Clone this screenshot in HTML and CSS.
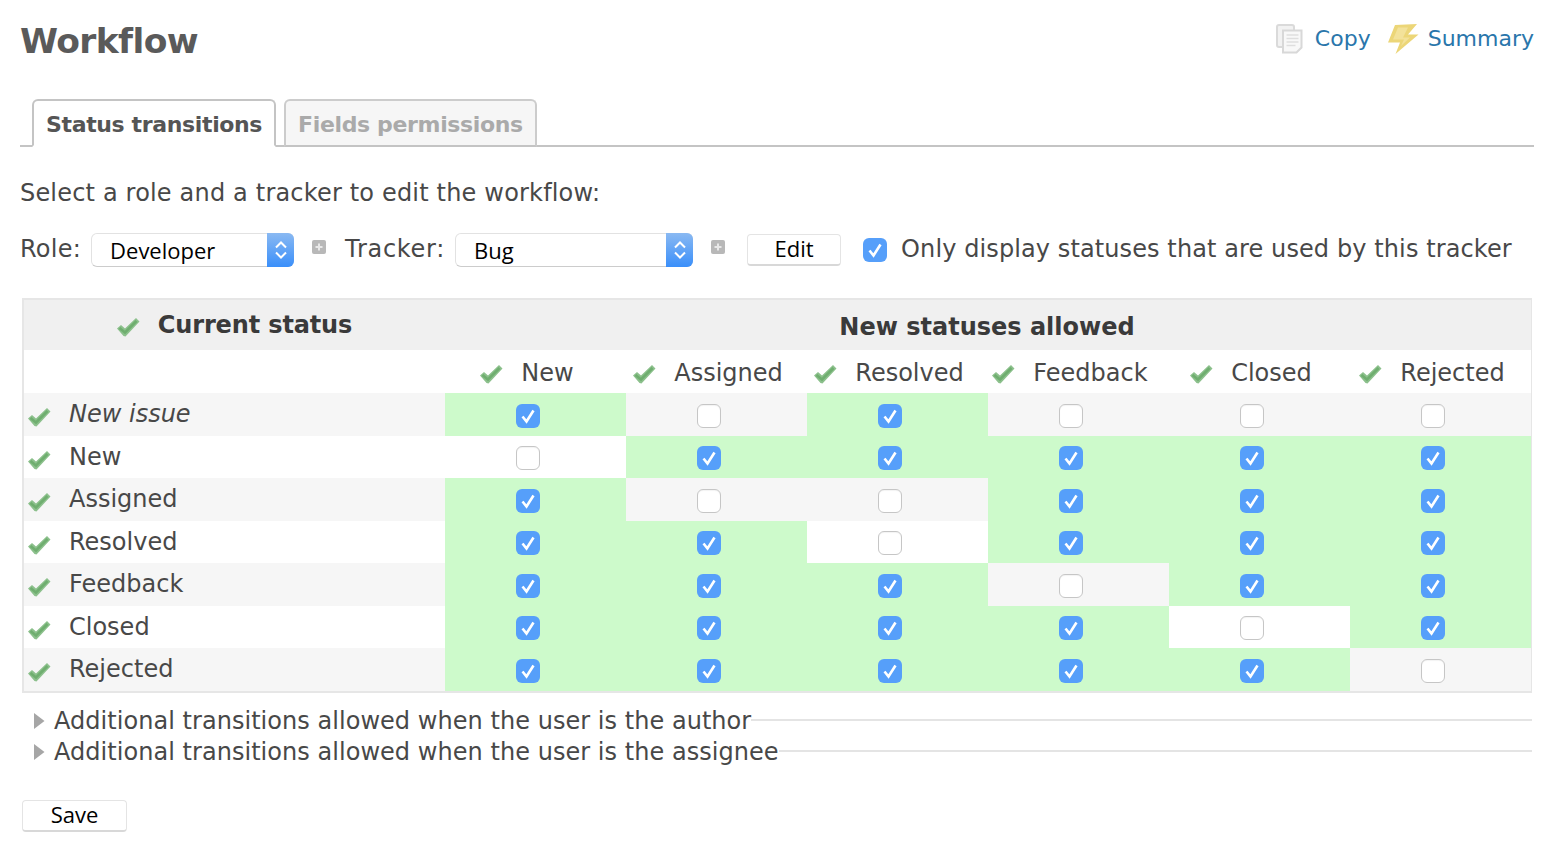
FILE: index.html
```html
<!DOCTYPE html>
<html lang="en">
<head>
<meta charset="utf-8">
<title>Workflow</title>
<link rel="stylesheet" href="styles.css">
</head>
<body>
<svg class="defs" width="0" height="0" aria-hidden="true">
  <defs>
    <symbol id="tick" viewBox="0 0 24 20">
      <path d="M1 11.500 5 8l4 3.500L20 1l3.500 3.500L9.500 19.500l-2-.5z" fill="#8cc08c"/>
      <path d="M3.500 11 9 15.500 20.500 4" fill="none" stroke="#6fae6f" stroke-width="2.500"/>
    </symbol>
    <symbol id="plus" viewBox="0 0 16 16">
      <rect x="1" y="1" width="14" height="14" rx="2" fill="#b8b8b8"/>
      <path d="M8 4.500v7M4.500 8h7" stroke="#e8e8e8" stroke-width="2"/>
    </symbol>
    <symbol id="tri" viewBox="0 0 12 18">
      <path d="M1 1 11.500 9 1 17z" fill="#a6a6a6"/>
    </symbol>
  </defs>
</svg>
<main class="page">
  <header class="top">
    <h1 class="title">Workflow</h1>
    <nav class="actions">
      <a class="action" href="#">
        <svg class="ico-copy" viewBox="0 0 27 30"><rect x="1" y="1" width="17" height="22" rx="2" fill="#f2f2f2" stroke="#dadada" stroke-width="2"/><path d="M7 6.500h18.500v17L20.500 28.500H7z" fill="#f8f8f8" stroke="#d8d8d8" stroke-width="2"/><path d="M10.500 11h12M10.500 14.500h12M10.500 18h12M10.500 21.500h9" stroke="#dedede" stroke-width="1.500"/></svg>
        Copy</a>
      <a class="action" href="#">
        <svg class="ico-bolt" viewBox="0 0 31 30"><path d="M7 1 29 0 20 10.500h10.500L7.500 30 12 18.500H0z" fill="#ecd678"/><path d="M10 3.500 5 15.500h11l-3 6.500 9-8.500h-7l5-10z" fill="#f3e29a"/></svg>
        Summary</a>
    </nav>
  </header>

  <div class="tabs">
    <a class="tab tab-on" href="#">Status transitions</a>
    <a class="tab" href="#">Fields permissions</a>
  </div>

  <p class="intro">Select a role and a tracker to edit the workflow:</p>

  <form class="filters">
    <span class="lbl lbl-role">Role:</span>
    <span class="select sel-role">Developer<span class="stepper"><svg viewBox="0 0 14 24"><path d="M2 9.500 7 4.500l5 5M2 14.500l5 5 5-5" fill="none" stroke="#fff" stroke-width="2"/></svg></span></span>
    <svg class="ico-plus"><use href="#plus"/></svg>
    <span class="lbl lbl-tracker">Tracker:</span>
    <span class="select sel-tracker">Bug<span class="stepper"><svg viewBox="0 0 14 24"><path d="M2 9.500 7 4.500l5 5M2 14.500l5 5 5-5" fill="none" stroke="#fff" stroke-width="2"/></svg></span></span>
    <svg class="ico-plus"><use href="#plus"/></svg>
    <span class="btn btn-edit">Edit</span>
    <span class="cb on cb-filter"></span>
    <span class="lbl">Only display statuses that are used by this tracker</span>
  </form>

  <table class="grid">
    <colgroup><col class="c0"><col class="cn"><col class="cn"><col class="cn"><col class="cn"><col class="cn"><col class="cn"></colgroup>
    <thead>
      <tr class="h1">
        <th class="cur"><svg class="tick"><use href="#tick"/></svg>Current status</th>
        <th class="allowed" colspan="6">New statuses allowed</th>
      </tr>
      <tr class="h2">
        <th></th>
        <th><svg class="tick"><use href="#tick"/></svg>New</th>
        <th><svg class="tick"><use href="#tick"/></svg>Assigned</th>
        <th><svg class="tick"><use href="#tick"/></svg>Resolved</th>
        <th><svg class="tick"><use href="#tick"/></svg>Feedback</th>
        <th><svg class="tick"><use href="#tick"/></svg>Closed</th>
        <th><svg class="tick"><use href="#tick"/></svg>Rejected</th>
      </tr>
    </thead>
    <tbody>
      <tr class="odd"><td class="name"><svg class="tick"><use href="#tick"/></svg><em>New issue</em></td><td class="g"><span class="cb on"></span></td><td><span class="cb"></span></td><td class="g"><span class="cb on"></span></td><td><span class="cb"></span></td><td><span class="cb"></span></td><td><span class="cb"></span></td></tr>
      <tr><td class="name"><svg class="tick"><use href="#tick"/></svg>New</td><td><span class="cb"></span></td><td class="g"><span class="cb on"></span></td><td class="g"><span class="cb on"></span></td><td class="g"><span class="cb on"></span></td><td class="g"><span class="cb on"></span></td><td class="g"><span class="cb on"></span></td></tr>
      <tr class="odd"><td class="name"><svg class="tick"><use href="#tick"/></svg>Assigned</td><td class="g"><span class="cb on"></span></td><td><span class="cb"></span></td><td><span class="cb"></span></td><td class="g"><span class="cb on"></span></td><td class="g"><span class="cb on"></span></td><td class="g"><span class="cb on"></span></td></tr>
      <tr><td class="name"><svg class="tick"><use href="#tick"/></svg>Resolved</td><td class="g"><span class="cb on"></span></td><td class="g"><span class="cb on"></span></td><td><span class="cb"></span></td><td class="g"><span class="cb on"></span></td><td class="g"><span class="cb on"></span></td><td class="g"><span class="cb on"></span></td></tr>
      <tr class="odd"><td class="name"><svg class="tick"><use href="#tick"/></svg>Feedback</td><td class="g"><span class="cb on"></span></td><td class="g"><span class="cb on"></span></td><td class="g"><span class="cb on"></span></td><td><span class="cb"></span></td><td class="g"><span class="cb on"></span></td><td class="g"><span class="cb on"></span></td></tr>
      <tr><td class="name"><svg class="tick"><use href="#tick"/></svg>Closed</td><td class="g"><span class="cb on"></span></td><td class="g"><span class="cb on"></span></td><td class="g"><span class="cb on"></span></td><td class="g"><span class="cb on"></span></td><td><span class="cb"></span></td><td class="g"><span class="cb on"></span></td></tr>
      <tr class="odd"><td class="name"><svg class="tick"><use href="#tick"/></svg>Rejected</td><td class="g"><span class="cb on"></span></td><td class="g"><span class="cb on"></span></td><td class="g"><span class="cb on"></span></td><td class="g"><span class="cb on"></span></td><td class="g"><span class="cb on"></span></td><td><span class="cb"></span></td></tr>
    </tbody>
  </table>

  <div class="more"><svg class="tri"><use href="#tri"/></svg><span>Additional transitions allowed when the user is the author</span><i class="rule"></i></div>
  <div class="more"><svg class="tri"><use href="#tri"/></svg><span>Additional transitions allowed when the user is the assignee</span><i class="rule"></i></div>

  <span class="btn btn-save">Save</span>
</main>
</body>
</html>
```

FILE: styles.css
```css
* { box-sizing: border-box; }
html, body { margin: 0; background: #fff; }
body {
  font-family: "DejaVu Sans", Verdana, sans-serif;
  font-size: 24px;
  color: #484848;
  overflow: hidden;
}
.defs { position: absolute; }
.page { width: 1552px; height: 856px; padding: 0 18px 0 20px; }

.top { display: flex; justify-content: space-between; align-items: flex-start; height: 99px; }
.title { margin: 18px 0 0; font-size: 34.500px; line-height: 46px; font-weight: 700; color: #5a5a5a; letter-spacing: -0.6px; }
.actions { display: flex; gap: 17px; padding-top: 22px; }
.action { display: flex; align-items: center; gap: 12px; color: #2a76ab; text-decoration: none; font-size: 22px; line-height: 34px; }
.action + .action { gap: 9px; }
.ico-copy { width: 27px; height: 30px; filter: blur(0.4px); }
.ico-bolt { width: 31px; height: 30px; filter: blur(0.4px); }

.tabs { display: flex; gap: 8px; height: 48px; padding-left: 12px; border-bottom: 2px solid #c4c4c4; }
.tab {
  height: 48px;
  padding: 9px 12px 0;
  border: 2px solid #ccc;
  border-bottom: 2px solid #c4c4c4;
  border-radius: 6px 6px 0 0;
  background: #f6f6f6;
  color: #aaa;
  font-weight: 700;
  font-size: 22px;
  line-height: 30px;
  text-decoration: none;
  letter-spacing: -0.36px;
  white-space: nowrap;
}
.tab-on { background: #fff; color: #555; border-color: #c4c4c4; border-bottom-color: #fff; }

.intro { margin: 0; padding-top: 30px; height: 84px; line-height: 32px; letter-spacing: 0.18px; font-size: 24px; }

.filters { display: flex; align-items: center; height: 36px; margin-bottom: 31px; }
.lbl { white-space: nowrap; letter-spacing: 0.1px; }
.lbl-role { letter-spacing: 0.25px; }
.lbl-tracker { letter-spacing: 0.72px; }
.select {
  position: relative;
  display: block;
  height: 34px;
  margin: 2px 0 0 10px;
  padding-left: 18px;
  border: 1px solid #e2e2e2;
  border-bottom-color: #ccc;
  border-radius: 6px;
  background: #fff;
  color: #000;
  font-family: "Open Sans", "DejaVu Sans", sans-serif;
  font-size: 22px;
  line-height: 33px;
}
.sel-role { width: 203px; }
.sel-tracker { width: 238px; }
.stepper {
  position: absolute;
  top: -1px;
  right: -1px;
  bottom: -1px;
  width: 27px;
  border-radius: 0 6px 6px 0;
  background: linear-gradient(#8ab9f2, #3a8ffa);
  display: flex;
  align-items: center;
  justify-content: center;
}
.stepper svg { width: 14px; height: 24px; }
.ico-plus { width: 16px; height: 16px; margin: 0 18px 4px 17px; flex: none; filter: blur(0.3px); }
.ico-plus + .btn { margin-left: 3px; }
.btn {
  display: block;
  text-align: center;
  border: 1px solid #e4e4e4;
  border-bottom: 2px solid #d8d8d8;
  border-radius: 4px;
  background: #fff;
  color: #000;
  font-family: "Open Sans", "DejaVu Sans", sans-serif;
  font-size: 22px;
}
.btn-edit { width: 94px; height: 32px; line-height: 27px; margin: 2px 22px 0 0; flex: none; }
.cb {
  display: inline-block;
  width: 24px;
  height: 24px;
  border: 1.500px solid #c6c6c6;
  border-radius: 6px;
  background: #fff;
  vertical-align: middle;
  box-shadow: inset 0 1px 1px rgba(0, 0, 0, 0.05);
}
.cb.on {
  border: 0;
  background: #569ffa url("data:image/svg+xml,%3Csvg xmlns='http://www.w3.org/2000/svg' viewBox='0 0 24 24'%3E%3Cpath d='M6.500 12.500 10.500 17.500 17.500 6.500' fill='none' stroke='%23fff' stroke-width='2.600'/%3E%3C/svg%3E") center / 24px 24px no-repeat;
  box-shadow: none;
}
.cb-filter { flex: none; margin: 1px 14px 0 0; }

.grid {
  width: 1510px;
  margin-left: 2px;
  border-collapse: separate;
  border-spacing: 0;
  table-layout: fixed;
  border: 2px solid #e6e6e6;
  border-right-width: 1px;
}
.c0 { width: 421px; }
.cn { width: 181px; }
.grid th { font-weight: 400; padding: 0; text-align: center; white-space: nowrap; }
.h1 { height: 50px; }
.h1 th { background: #f0f0f0; font-weight: 700; color: #3a3a3a; font-size: 24px; }
.h1 .cur { padding: 0 1px 0 0; letter-spacing: -0.14px; }
.h1 .cur .tick { vertical-align: -4px; }
.h1 .allowed { padding: 4px 2px 0 0; }
.h2 { height: 43px; }
.h2 th { padding: 2px 18px 0 0; }
.h2 th:first-child { padding-right: 0; }
.h2 .tick { vertical-align: -3px; }
.grid td { padding: 1px 15px 0 0; text-align: center; height: 42.500px; }
.odd td { background: #f6f6f6; }
.grid td.g { background: #cdfacb; }
.grid td.name { text-align: left; padding: 0 0 0 3px; white-space: nowrap; }
.tick { width: 24px; height: 20px; margin-right: 18px; vertical-align: -5px; filter: blur(0.35px); }

.more { display: flex; align-items: center; height: 31px; margin-left: 13px; white-space: nowrap; letter-spacing: 0.04px; }
.tri { width: 12px; height: 18px; flex: none; margin-right: 9px; filter: blur(0.4px); }
.rule { flex: 1; height: 2px; margin: 0 2px 2px 0; background: #e4e4e4; }
.grid + .more { margin-top: 13px; }
.btn-save { width: 105px; height: 32px; line-height: 26px; margin: 32px 0 0 2px; }
```
